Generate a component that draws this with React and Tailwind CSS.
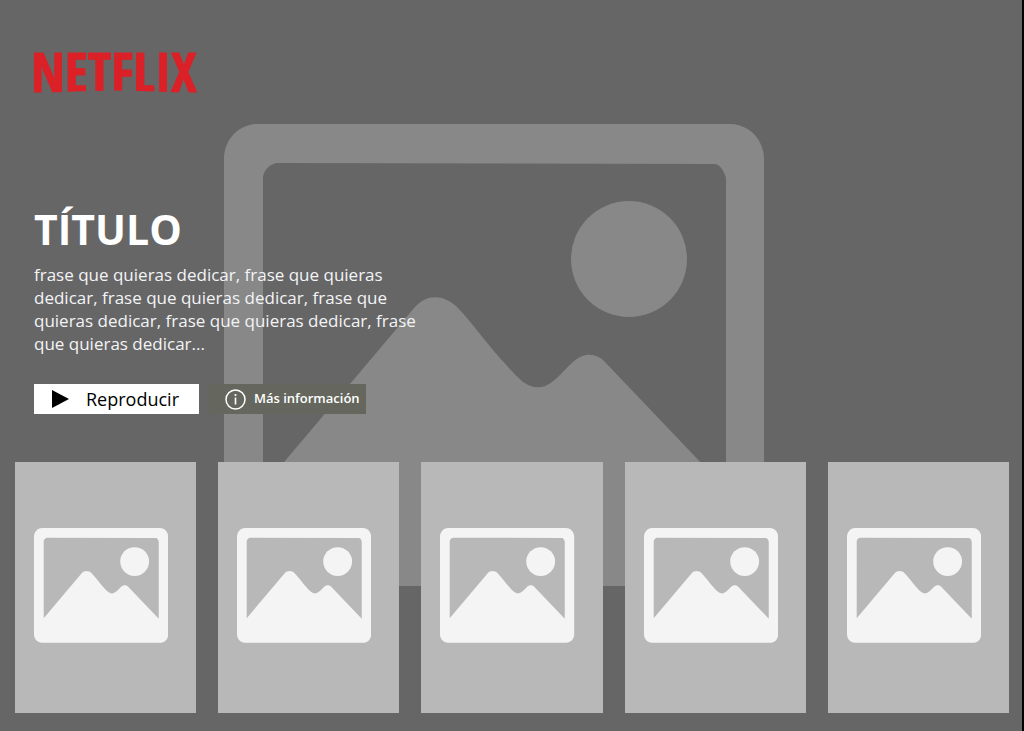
const cards = [1, 2, 3, 4, 5];

const PlaceholderImage = ({ className }) => {
  return (
    <svg viewBox="0 0 540 462" className={className} fill="currentColor" aria-hidden="true">
      <path
        fillRule="evenodd"
        d="M32 0H507C526 1 540 16 540 35V428C540 447 526 462 508 462H32C14 462 0 447 0 428V35C0 16 14 1 32 0Z
           M52 39C45 41 40 46 39 53V363L191 183C203 170 219 170 233 183C249 200 261 217 275 233C284 243 291 251 299 258C309 265 319 265 328 258C336 252 342 244 349 238C360 228 372 229 380 237L502 365V54C500 47 496 40 490 40Z"
      />
      <circle cx="405" cy="135" r="58" />
    </svg>
  );
};

const Logo = () => {
  return (
    <a href="#" className="block w-fit">
      <svg viewBox="0 0 170 46" className="h-[46px] w-[170px] overflow-visible">
        <text
          x="-3"
          y="42"
          className="fill-[#db2127] stroke-[#db2127] text-[54px] font-bold"
          style={{ fontFamily: '"Noto Sans ExtraCondensed", "Open Sans Condensed", "Liberation Sans Narrow", sans-serif' }}
        >
          NETFLIX
        </text>
        {/* arched lower edge of the wordmark */}
        <path d="M-2 44Q81 37 164 44V48H-2Z" fill="#666666" />
      </svg>
    </a>
  );
};

const App = () => {
  return (
    <div className="relative min-h-screen overflow-hidden bg-[#666666] border-r-2 border-black font-['Open_Sans',sans-serif] text-white">
      <div className="absolute inset-0 flex justify-center items-start pt-[124px] pr-[34px]">
        <PlaceholderImage className="w-[540px] text-[#888888]" />
      </div>

      <div className="relative flex min-h-screen flex-col justify-between pt-[50px] pb-[18px]">
        <main className="px-[34px]">
          <Logo />
          <h1 className="mt-[103px] text-[41px] leading-[60px] font-bold">TÍTULO</h1>
          <p className="mt-1 max-w-[400px] text-[17px] leading-[23px] text-gray-100">
            frase que quieras dedicar, frase que quieras dedicar, frase que quieras dedicar, frase que
            quieras dedicar, frase que quieras dedicar, frase que quieras dedicar...
          </p>
          <div className="mt-[29px] flex gap-[10px]">
            <button className="flex h-[30px] w-[165px] items-center gap-[17px] bg-white pl-[18px] text-[18px] font-medium text-black">
              <svg viewBox="0 0 17 18" className="h-[18px] w-[17px]" aria-hidden="true">
                <path d="M0 0L17 9L0 18Z" fill="currentColor" />
              </svg>
              Reproducir
            </button>
            <button className="flex h-[30px] w-[157px] items-center gap-2 bg-[#65675e] pl-4 text-[13px] font-semibold">
              <svg viewBox="0 0 21 21" className="h-[21px] w-[21px]" fill="none" stroke="currentColor" aria-hidden="true">
                <circle cx="10.5" cy="10.5" r="9.5" strokeWidth="1.5" />
                <path d="M10.5 8.5V15.5" strokeWidth="1.6" />
                <circle cx="10.5" cy="6" r="1.1" fill="currentColor" stroke="none" />
              </svg>
              Más información
            </button>
          </div>
        </main>

        <section className="mt-12 grid grid-cols-5 gap-[22px] pl-[15px] pr-[13px]">
          {cards.map((card) => (
            <div key={card} className="h-[251px] bg-[#b8b8b8] pl-[19px] pr-[28px] pt-[66px]">
              <PlaceholderImage className="w-full text-[#f4f4f4]" />
            </div>
          ))}
        </section>
      </div>
    </div>
  );
};

export default App;
